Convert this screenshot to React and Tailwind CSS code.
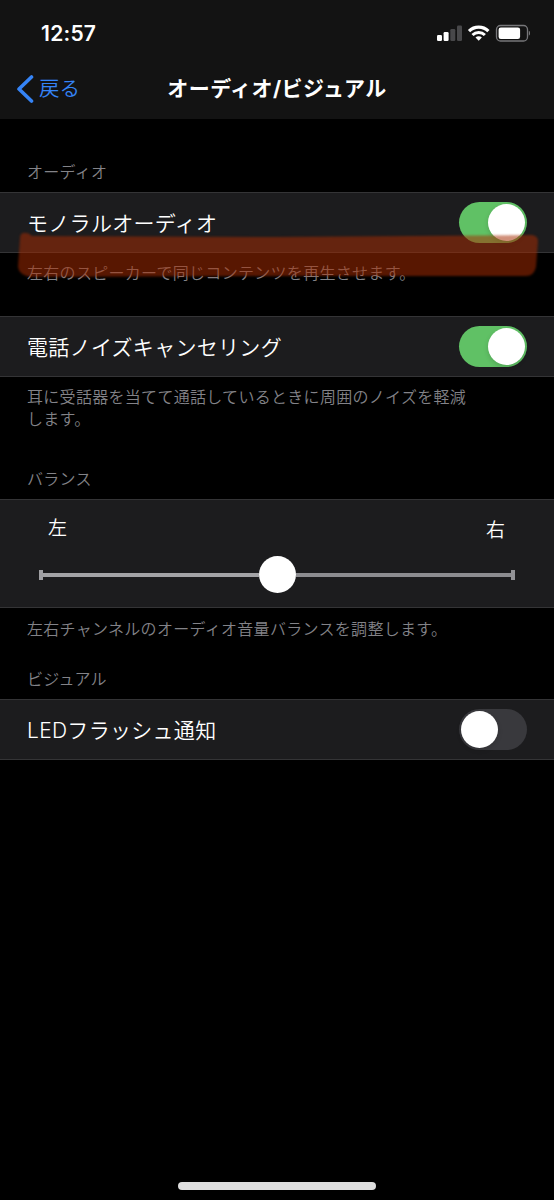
import React, { useState } from 'react';
import clsx from 'clsx';

function StatusIcons() {
  return (
    <svg width="96" height="20" viewBox="0 0 96 20" fill="none">
      <rect x="3" y="12" width="5" height="6" rx="1.2" fill="#fff" />
      <rect x="9.6" y="9" width="5" height="9" rx="1.2" fill="#fff" />
      <rect x="16.3" y="6" width="5" height="12" rx="1.2" fill="#48484a" />
      <rect x="23" y="2.5" width="5" height="15.5" rx="1.2" fill="#48484a" />
      <g transform="translate(44.7 17.8)">
        <path d="M0 0 L-3.2 -3.2 A4.6 4.6 0 0 1 3.2 -3.2 Z" fill="#fff" />
        <path d="M-6.2 -5.8 A8.9 8.9 0 0 1 6.2 -5.8" stroke="#fff" strokeWidth="3" />
        <path d="M-9.7 -9.6 A13.8 13.8 0 0 1 9.7 -9.6" stroke="#fff" strokeWidth="3.2" />
      </g>
      <rect x="62.5" y="2.5" width="31" height="15.5" rx="4" stroke="#77777a" strokeWidth="1.3" />
      <rect x="64.6" y="4.6" width="21.5" height="11.3" rx="2.2" fill="#fff" />
      <path d="M94.8 7.8 C96.6 8.6 96.6 11.9 94.8 12.7 Z" fill="#77777a" />
    </svg>
  );
}

function Toggle({ checked, onChange }) {
  return (
    <button
      type="button"
      role="switch"
      aria-checked={checked}
      onClick={() => onChange(!checked)}
      className={clsx(
        'flex h-[41px] w-[68px] items-center rounded-full px-[2px]',
        checked ? 'justify-end bg-[#60c165]' : 'justify-start bg-[#39393d]'
      )}
    >
      <span className="size-[37px] rounded-full bg-white shadow-[0_2px_5px_rgba(0,0,0,0.15)]" />
    </button>
  );
}

function SwitchRow({ label, checked, onChange }) {
  return (
    <div className="flex h-[61px] items-center justify-between border-y border-[#343436] bg-[#1c1c1e] pr-[27px] pl-[27px]">
      <span className="pt-[2px] text-[21px] font-[350] tracking-[0.3px] text-white">{label}</span>
      <Toggle checked={checked} onChange={onChange} />
    </div>
  );
}

function Caption({ children, className }) {
  return (
    <p className={clsx('px-[27px] text-[16px] leading-[22px] font-[350] tracking-[0.3px] text-[#838388]', className)}>
      {children}
    </p>
  );
}

export default function App() {
  const [mono, setMono] = useState(true);
  const [noise, setNoise] = useState(true);
  const [flash, setFlash] = useState(false);

  return (
    <div className="flex h-[1200px] w-[554px] flex-col overflow-hidden bg-black font-[Inter,'Noto_Sans_CJK_JP',sans-serif]">
      <header className="h-[119px] shrink-0 bg-[#131313]">
        <div className="flex h-[66px] items-center justify-between pr-[24px] pl-[41px]">
          <span className="pt-[2px] text-[21px] font-semibold tracking-[0.25px] text-white">12:57</span>
          <StatusIcons />
        </div>
        <div className="grid h-[45px] grid-cols-[1fr_auto_1fr] items-center">
          <button type="button" className="flex items-center gap-[5px] pl-[16px] text-[#3584f7]">
            <svg width="18" height="28" viewBox="0 0 18 28" fill="none">
              <path d="M15.5 2 L3 14 L15.5 26" stroke="currentColor" strokeWidth="3.6" strokeLinecap="round" strokeLinejoin="round" />
            </svg>
            <span className="pt-[2px] text-[20.5px] font-[350]">戻る</span>
          </button>
          <h1 className="text-[21px] font-bold tracking-[0.45px] text-white">オーディオ/ビジュアル</h1>
          <span />
        </div>
      </header>

      <main className="flex flex-col">
        <Caption className="pt-[42px] pb-[9px]">オーディオ</Caption>
        <div className="relative">
          <SwitchRow label="モノラルオーディオ" checked={mono} onChange={setMono} />
          <Caption className="pt-[9px] pb-[32px]">左右のスピーカーで同じコンテンツを再生させます。</Caption>
          {/* marker stroke over the row */}
          <svg className="pointer-events-none absolute top-[36px] left-[14px]" width="528" height="54" viewBox="0 0 528 54">
            <path
              d="M9 5 Q14 4 18 8 L260 9 L518 7 Q524 8 524 13 L522 39 Q520 48 512 48 L270 48 L17 49 Q5 47 4 39 L6 10 Q6 6 9 5 Z"
              fill="#a72b02"
              fillOpacity="0.53"
              className="blur-[1px]"
            />
          </svg>
        </div>

        <SwitchRow label="電話ノイズキャンセリング" checked={noise} onChange={setNoise} />
        <Caption className="pt-[9px]">
          耳に受話器を当てて通話しているときに周囲のノイズを軽減
          <br />
          します。
        </Caption>

        <Caption className="pt-[38px] pb-[9px]">バランス</Caption>
        <div className="h-[109px] border-y border-[#343436] bg-[#1c1c1e]">
          <div className="flex justify-between pt-[14px] pr-[49px] pl-[48px] text-[19px] leading-[30px] font-[350] text-white">
            <span>左</span>
            <span className="pt-[2px]">右</span>
          </div>
          <div className="mx-[39px] mt-[10px] flex h-[37px] items-center">
            <span className="h-[10px] w-[4px] bg-[#a0a0a4]" />
            <span className="h-[4px] flex-1 bg-[#a3a3a6]" />
            <span className="size-[37px] rounded-full bg-white" />
            <span className="h-[4px] flex-1 bg-[#8c8c90]" />
            <span className="h-[10px] w-[4px] bg-[#929296]" />
          </div>
        </div>
        <Caption className="pt-[10px]">左右チャンネルのオーディオ音量バランスを調整します。</Caption>

        <Caption className="pt-[28px] pb-[9px]">ビジュアル</Caption>
        <SwitchRow label="LEDフラッシュ通知" checked={flash} onChange={setFlash} />
      </main>

      <div className="mt-auto mb-[10px] h-[8px] w-[198px] self-center rounded-full bg-[#dedede]" />
    </div>
  );
}
